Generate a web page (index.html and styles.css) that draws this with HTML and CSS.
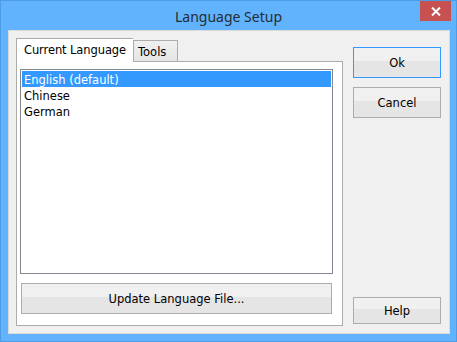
FILE: index.html
```html
<!DOCTYPE html>
<html>
<head>
<meta charset="utf-8">
<link rel="stylesheet" href="styles.css">
</head>
<body>
<div class="window">
  <div class="titlebar">
    <div class="title">Language Setup</div>
    <div class="close">
      <svg width="10" height="9" viewBox="0 0 10 9"><path d="M1 0.5 L9 8.5 M9 0.5 L1 8.5" stroke="#fff" stroke-width="2"/></svg>
    </div>
  </div>
  <div class="client">
    <div class="tabs">
      <div class="tabstrip">
        <div class="tab active">Current Language</div>
        <div class="tab">Tools</div>
      </div>
      <div class="panel">
        <div class="listbox">
          <div class="item selected">English (default)</div>
          <div class="item">Chinese</div>
          <div class="item">German</div>
        </div>
        <div class="btn wide">Update Language File...</div>
      </div>
    </div>
    <div class="side">
      <div class="btn default">Ok</div>
      <div class="btn">Cancel</div>
      <div class="spacer"></div>
      <div class="btn help">Help</div>
    </div>
  </div>
</div>
</body>
</html>
```
FILE: styles.css
```css
* { box-sizing: border-box; }
html, body { margin: 0; padding: 0; }
body { width: 457px; height: 342px; overflow: hidden; font-family: "DejaVu Sans", Verdana, sans-serif; font-size: 11.5px; color: #000; }
.window {
  width: 457px; height: 342px;
  background: #61b3fd;
  border: 1px solid #4c9de6;
  display: flex; flex-direction: column;
}
.titlebar {
  height: 30px; position: relative;
  display: flex; align-items: center; justify-content: center;
}
.title {
  font-family: "Noto Sans", "Open Sans", sans-serif; font-size: 14px; color: #262c33;
  margin-top: 1px;
}
.close {
  position: absolute; right: 5px; top: 0;
  width: 31px; height: 20px; background: #c75050;
  display: flex; align-items: center; justify-content: center;
}
.client {
  margin: 0 6px 7px 7px;
  flex: 1;
  background: #f0f0f0;
  border: 1px solid #d9d9d9;
  display: flex;
  padding: 7px 8px 7px 7px;
  gap: 10px;
}
.tabs { display: flex; flex-direction: column; width: 327px; }
.tabstrip { display: flex; align-items: flex-end; height: 23px; position: relative; z-index: 1; }
.tab {
  height: 21px; padding: 2px 5px 0 5px;
  border: 1px solid #acacac; border-bottom: none;
  background: linear-gradient(#f0f0f0, #e5e5e5);
  white-space: nowrap;
}
.tab.active {
  height: 24px; width: 117px; padding: 4px 0 0 7px;
  background: #fff; margin-bottom: -1px;
  border-right: none;
  letter-spacing: -0.1px;
}
.tab + .tab { width: 45px; padding-left: 4px; padding-top: 4px; }
.panel {
  flex: 1; background: #fff; border: 1px solid #acacac;
  padding: 7px 9px 11px 3px;
  display: flex; flex-direction: column;
}
.listbox {
  height: 205px; border: 1px solid #828790; padding: 1px;
}
.item { height: 16px; line-height: 14px; padding: 2px 0 0 2px; }
.item.selected { background: #3399ff; color: #fff; }
.btn {
  height: 31px;
  border: 1px solid #adadad;
  background: linear-gradient(#f0f0f0 0 45%, #e5e5e5 45% 100%);
  display: flex; align-items: center; justify-content: center;
}
.wide { margin: 9px 1px 0 1px; }
.side { width: 88px; display: flex; flex-direction: column; padding-top: 9px; gap: 9px; }
.btn.default { border-color: #3399ff; }
.spacer { flex: 1; }
.btn.help { height: 27px; margin-bottom: 2px; }
```
